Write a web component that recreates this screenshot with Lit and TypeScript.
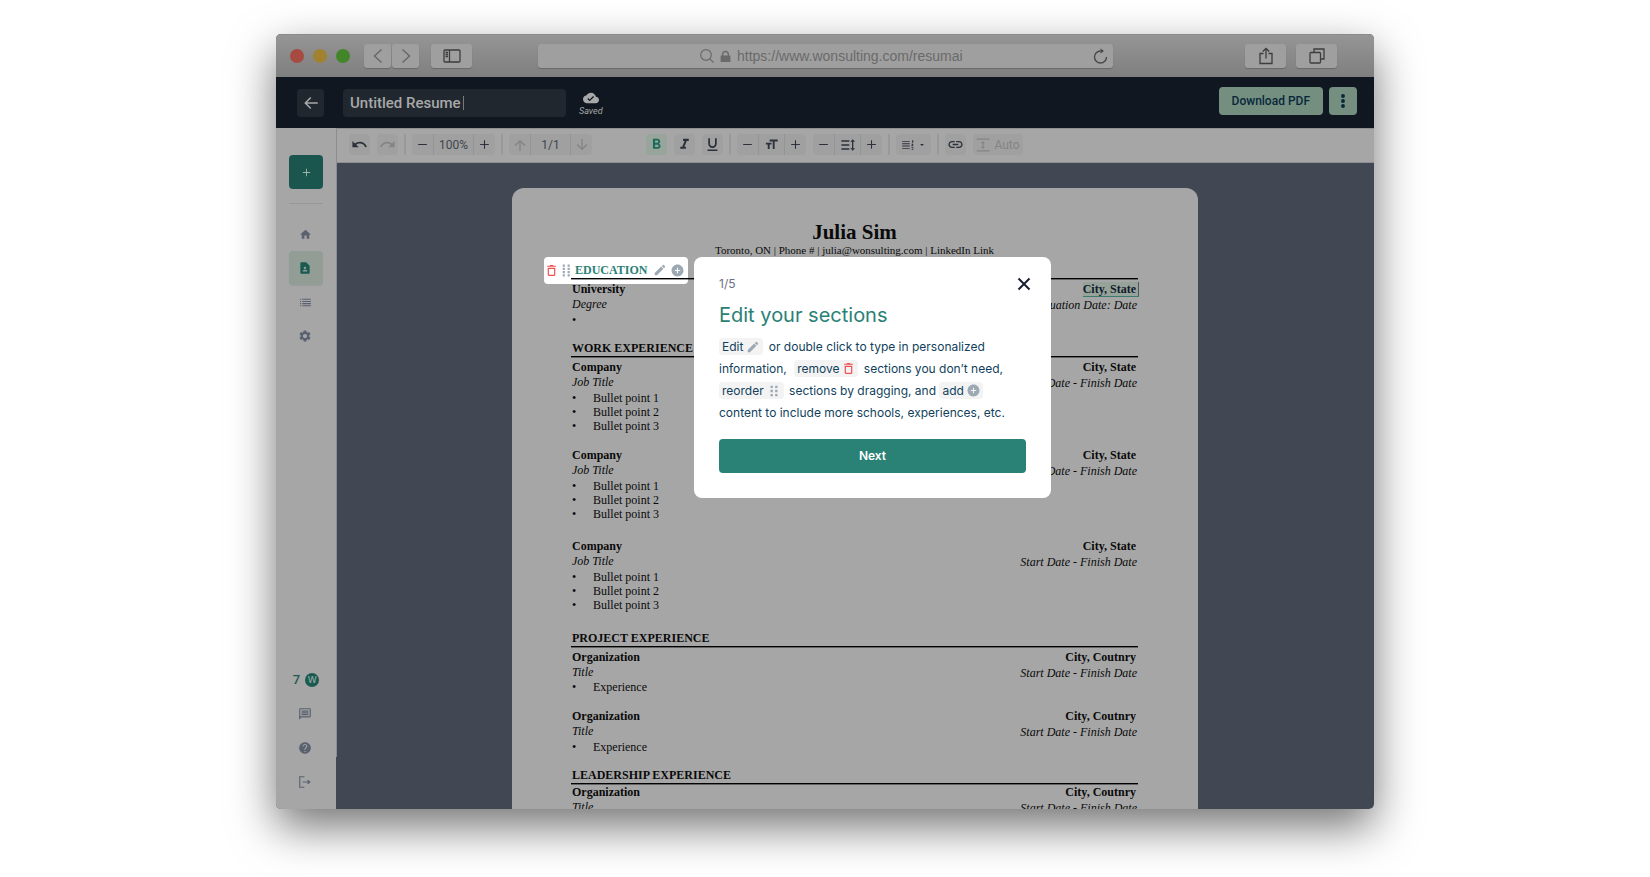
import { LitElement, html, css, svg, nothing } from "lit";
import { customElement } from "lit/decorators.js";
import { classMap } from "lit/directives/class-map.js";

const P: Record<string, string> = {
  home: "M10 20v-6h4v6h5v-8h3L12 3 2 12h3v8z",
  settings:
    "M19.14 12.94c.04-.3.06-.61.06-.94 0-.32-.02-.64-.07-.94l2.03-1.58c.18-.14.23-.41.12-.61l-1.92-3.32c-.12-.22-.37-.29-.59-.22l-2.39.96c-.5-.38-1.03-.7-1.62-.94l-.36-2.54c-.04-.24-.24-.41-.48-.41h-3.84c-.24 0-.43.17-.47.41l-.36 2.54c-.59.24-1.13.57-1.62.94l-2.39-.96c-.22-.08-.47 0-.59.22L2.74 8.87c-.12.21-.08.47.12.61l2.03 1.58c-.05.3-.09.63-.09.94s.02.64.07.94l-2.03 1.58c-.18.14-.23.41-.12.61l1.92 3.32c.12.22.37.29.59.22l2.39-.96c.5.38 1.03.7 1.62.94l.36 2.54c.05.24.24.41.48.41h3.84c.24 0 .44-.17.47-.41l.36-2.54c.59-.24 1.13-.56 1.62-.94l2.39.96c.22.08.47 0 .59-.22l1.92-3.32c.12-.22.07-.47-.12-.61l-2.01-1.58zM12 15.6c-1.98 0-3.6-1.62-3.6-3.6s1.62-3.6 3.6-3.6 3.6 1.62 3.6 3.6-1.62 3.6-3.6 3.6z",
  list: "M2 5h2v2H2zM6 5h16v2H6zM2 9h2v2H2zM6 9h16v2H6zM2 13h2v2H2zM6 13h16v2H6zM2 17h2v2H2zM6 17h16v2H6z",
  profile:
    "M14 2H6c-1.1 0-2 .9-2 2v16c0 1.1.9 2 2 2h12c1.1 0 2-.9 2-2V8l-6-6zm-2 8c1.1 0 2 .9 2 2s-.9 2-2 2-2-.9-2-2 .9-2 2-2zm4 8H8v-.57c0-.81.48-1.53 1.22-1.85a6.95 6.95 0 0 1 5.56 0A2.01 2.01 0 0 1 16 17.43V18z",
  chat: "M20 2H4c-1.1 0-1.99.9-1.99 2L2 22l4-4h14c1.1 0 2-.9 2-2V4c0-1.1-.9-2-2-2zM4 4h16v12H4zM6 12h12v2H6zM6 9h12v2H6zM6 6h12v2H6z",
  help: "M12 2C6.48 2 2 6.48 2 12s4.48 10 10 10 10-4.48 10-10S17.52 2 12 2zm1 17h-2v-2h2v2zm2.07-7.75l-.9.92C13.45 12.9 13 13.5 13 15h-2v-.5c0-1.1.45-2.1 1.17-2.83l1.24-1.26c.37-.36.59-.86.59-1.41 0-1.1-.9-2-2-2s-2 .9-2 2H8c0-2.21 1.79-4 4-4s4 1.79 4 4c0 .88-.36 1.68-.93 2.25z",
  logout: "M17 8l-1.41 1.41L17.17 11H8v2h9.17l-1.58 1.58L17 16l5-4zM4 4h7V2H2v20h9v-2H4z",
  undo: "M12.5 8c-2.65 0-5.05.99-6.9 2.6L2 7v9h9l-3.62-3.62c1.39-1.16 3.16-1.88 5.12-1.88 3.54 0 6.55 2.31 7.6 5.5l2.37-.78C21.08 11.03 17.15 8 12.5 8z",
  redo: "M18.4 10.6C16.55 8.99 14.15 8 11.5 8c-4.65 0-8.58 3.03-9.96 7.22L3.9 16c1.05-3.19 4.05-5.5 7.6-5.5 1.95 0 3.73.72 5.12 1.88L13 16h9V7l-3.6 3.6z",
  minus: "M4 11h16v2H4z",
  plus: "M20 13h-7v7h-2v-7H4v-2h7V4h2v7h7z",
  up: "M4 12l1.41 1.41L11 7.83V21h2V7.83l5.58 5.59L20 12l-8-8z",
  down: "M20 12l-1.41-1.41L13 16.17V3h-2v13.17l-5.58-5.59L4 12l8 8z",
  back: "M21 11H6.83l5.59-5.59L11 4l-8 8 8 8 1.41-1.41L6.83 13H21z",
  bold: "M15.6 10.79c.97-.67 1.65-1.77 1.65-2.79 0-2.26-1.75-4-4-4H7v14h7.04c2.09 0 3.71-1.7 3.71-3.79 0-1.52-.86-2.82-2.15-3.42zM10 6.5h3c.83 0 1.5.67 1.5 1.5s-.67 1.5-1.5 1.5h-3v-3zm3.5 9H10v-3h3.5c.83 0 1.5.67 1.5 1.5s-.67 1.5-1.5 1.5z",
  italic: "M10 4v3h2.21l-3.42 8H6v3h8v-3h-2.21l3.42-8H18V4z",
  underline:
    "M12 17c3.31 0 6-2.69 6-6V3h-2.5v8c0 1.93-1.57 3.5-3.5 3.5S8.5 12.93 8.5 11V3H6v8c0 3.31 2.69 6 6 6zm-7 2v2h14v-2H5z",
  size: "M9 4v3h5v12h3V7h5V4H9zm-6 8h3v7h3v-7h3V9H3v3z",
  spacing: "M18 7h-2.5L19 3.5 22.5 7H20v10h2.5L19 20.5 15.5 17H18V7zM14 5v2H2V5h12zm0 14H2v-2h12v2zm0-6H2v-2h12v2z",
  numbered:
    "M2 5h13v1.500H2zM2 9h13v1.500H2zM2 13h13v1.500H2zM2 17h13v1.500H2zM19 4h2v4h-2zM18 10h3v2h-1v1h1v1h-3v-2h1v-1h-1zM18 16h3v4h-3v-1h2v-2h-2z",
  link: "M3.9 12c0-1.71 1.39-3.1 3.1-3.1h4V7H7c-2.76 0-5 2.24-5 5s2.24 5 5 5h4v-1.9H7c-1.71 0-3.1-1.39-3.1-3.1zM8 13h8v-2H8v2zm9-6h-4v1.9h4c1.71 0 3.1 1.39 3.1 3.1s-1.39 3.1-3.1 3.1h-4V17h4c2.76 0 5-2.24 5-5s-2.24-5-5-5z",
  fit: "M1 1h22v2H1zM1 21h22v2H1zM13 9h2.500L12 5 8.500 9H11v6H8.500l3.500 4 3.500-4H13z",
  cloud:
    "M19.35 10.04C18.67 6.59 15.64 4 12 4 9.11 4 6.6 5.64 5.35 8.04 2.34 8.36 0 10.91 0 14c0 3.31 2.69 6 6 6h13c2.76 0 5-2.24 5-5 0-2.64-2.05-4.78-4.65-4.96zM10 17l-3.5-3.5 1.41-1.41L10 14.17 15.18 9l1.41 1.41L10 17z",
  pencil:
    "M3 17.25V21h3.75L17.81 9.94l-3.75-3.75L3 17.25zM20.71 7.04c.39-.39.39-1.02 0-1.41l-2.34-2.34c-.39-.39-1.02-.39-1.41 0l-1.83 1.83 3.75 3.75 1.83-1.83z",
  addCircle:
    "M12 1C5.900 1 1 5.900 1 12s4.900 11 11 11 11-4.900 11-11S18.100 1 12 1zm5 12h-4v4h-2v-4H7v-2h4V7h2v4h4v2z",
  trash:
    "M5 20c0 1.100.9 2 2 2h10c1.100 0 2-.9 2-2V7H5v13zM7.200 9h9.600v10.800H7.200V9zm8.300-6l-1-1h-5l-1 1H4v2.200h16V3h-4.500z",
  drag: "M5 1h4v4H5zM14 1h4v4h-4zM5 7h4v4H5zM14 7h4v4h-4zM5 13h4v4H5zM14 13h4v4h-4zM5 19h4v4H5zM14 19h4v4h-4z",
  dragSmall: "M6 3h4v4H6zM14 3h4v4h-4zM6 10h4v4H6zM14 10h4v4h-4zM6 17h4v4H6zM14 17h4v4h-4z",
  kebab:
    "M12 8a2.600 2.600 0 1 0 0-5.200A2.600 2.600 0 0 0 12 8zm0 6.600a2.600 2.600 0 1 0 0-5.200 2.600 2.600 0 0 0 0 5.200zm0 6.600a2.600 2.600 0 1 0 0-5.200 2.600 2.600 0 0 0 0 5.200z",
  caret: "M6 9h12l-6 6z",
  lock: "M3 10h18v12H3zM5.500 10V8a6.500 6.500 0 0 1 13 0v2h-2.500V8a4 4 0 0 0-8 0v2z",
};

const icon = (name: string, size: number) => html`<svg
  class="ic"
  width=${size}
  height=${size}
  viewBox="0 0 24 24"
  aria-hidden="true"
>
  <path fill-rule="evenodd" d=${P[name]}></path>
</svg>`;

const line = (w: number, h: number, sw: number, body: unknown) => html`<svg
  class="ln"
  width=${w}
  height=${h}
  viewBox="0 0 ${w} ${h}"
  stroke-width=${sw}
  aria-hidden="true"
>
  ${body}
</svg>`;

interface Entry {
  title: string;
  sub: string;
  place: string;
  dates: string;
  items: string[];
  spacing?: "snug" | "roomy";
  selected?: boolean;
}
interface Section {
  name: string;
  gap: string;
  editing?: boolean;
  entries: Entry[];
}

const DATES = "Start Date - Finish Date";
const job = (spacing?: "roomy"): Entry => ({
  title: "Company",
  sub: "Job Title",
  place: "City, State",
  dates: DATES,
  items: ["Bullet point 1", "Bullet point 2", "Bullet point 3"],
  spacing,
});
const org = (spacing?: "snug"): Entry => ({
  title: "Organization",
  sub: "Title",
  place: "City, Coutnry",
  dates: DATES,
  items: ["Experience"],
  spacing,
});

const SECTIONS: Section[] = [
  {
    name: "EDUCATION",
    gap: "near",
    editing: true,
    entries: [
      {
        title: "University",
        sub: "Degree",
        place: "City, State",
        dates: "Graduation Date: Date",
        items: [""],
        selected: true,
      },
    ],
  },
  { name: "WORK EXPERIENCE", gap: "mid", entries: [job(), job(), job("roomy")] },
  { name: "PROJECT EXPERIENCE", gap: "far", entries: [org("snug"), org()] },
  { name: "LEADERSHIP EXPERIENCE", gap: "mid tight", entries: [org("snug")] },
];

const base = css`
  *,
  *::before,
  *::after {
    box-sizing: border-box;
  }
  button {
    font: inherit;
    color: inherit;
    border: 0;
    padding: 0;
    margin: 0;
    background: none;
    display: inline-flex;
    align-items: center;
    justify-content: center;
    flex: none;
  }
  h1,
  h2,
  p,
  ul {
    margin: 0;
    padding: 0;
    font-weight: 400;
  }
  ul {
    list-style: none;
  }
  .ic {
    fill: currentColor;
    display: block;
    flex: none;
  }
  .ln {
    fill: none;
    stroke: currentColor;
    display: block;
    flex: none;
  }
`;

@customElement("browser-bar")
class BrowserBar extends LitElement {
  static styles = [
    base,
    css`
      :host {
        display: flex;
        align-items: center;
        height: 43px;
        padding: 0 37px 0 14px;
        background: linear-gradient(#959595, #7f7f7f);
        border-top: 1px solid #8b8b8b;
        color: #555;
      }
      .lights {
        display: flex;
        gap: 9px;
        margin-right: 14px;
      }
      .dot {
        width: 14px;
        height: 14px;
        border-radius: 50%;
      }
      .red {
        background: #a74a42;
      }
      .yellow {
        background: #a08230;
      }
      .green {
        background: #438529;
      }
      .btn {
        width: 41px;
        height: 24px;
        border-radius: 3px;
        background: #9f9f9f;
        box-shadow: 0 1px 1px rgba(0, 0, 0, 0.2);
        color: #3d3d3d;
      }
      .nav {
        display: flex;
        gap: 1px;
        margin-right: 12px;
      }
      .nav .btn {
        width: 27px;
        color: #686868;
      }
      .url {
        flex: 1;
        min-width: 0;
        max-width: 575px;
        height: 24px;
        margin: 0 auto 0 66px;
        display: flex;
        align-items: center;
        padding: 0 5px 0 14px;
        border-radius: 3px;
        background: #9f9f9f;
        box-shadow: 0 1px 1px rgba(0, 0, 0, 0.2);
        color: #6a6a6a;
      }
      .addr {
        flex: 1;
        min-width: 0;
        display: flex;
        align-items: center;
        justify-content: center;
        gap: 5px;
        padding-left: 18px;
      }
      .addr input {
        width: 226px;
        padding: 0;
        border: 0;
        background: none;
        color: inherit;
        font: 14px/20px "Liberation Sans", sans-serif;
      }
      .end {
        display: flex;
        gap: 10px;
      }
      .url button {
        color: #484848;
      }
    `,
  ];
  render() {
    return html`
      <div class="lights">
        <span class="dot red"></span><span class="dot yellow"></span><span class="dot green"></span>
      </div>
      <div class="nav">
        <button class="btn" aria-label="Back">
          ${line(10, 16, 1.5, svg`<path d="M8.500 1.500L1.500 8l7 6.500"/>`)}
        </button>
        <button class="btn" aria-label="Forward">
          ${line(10, 16, 1.5, svg`<path d="M1.500 1.500L8.500 8l-7 6.500"/>`)}
        </button>
      </div>
      <button class="btn" aria-label="Show sidebar">
        ${line(
          18,
          14,
          1.3,
          svg`<rect x="1" y="1" width="16" height="12" rx="1"/><path d="M6.500 1v12M2.500 3.500H5M2.500 5.500H5M2.500 7.500H5"/>`,
        )}
      </button>
      <div class="url">
        <div class="addr">
          ${line(14, 14, 1.2, svg`<circle cx="6" cy="6" r="5.300"/><path d="M9.800 9.800L13.500 13.500"/>`)}
          ${icon("lock", 13)}
          <input aria-label="Address" value="https://www.wonsulting.com/resumai" />
        </div>
        <button aria-label="Reload">
          ${line(
            15,
            16,
            1.4,
            svg`<path d="M7.500 3A6 6 0 1 0 13.500 9"/><path d="M7.500.500v5L11 3z" fill="currentColor" stroke="none"/>`,
          )}
        </button>
      </div>
      <div class="end">
        <button class="btn" aria-label="Share">
          ${line(14, 18, 1.3, svg`<path d="M4.500 6.500H1v10h12v-10H9.500M7 11.500V1.500M3.800 4.500L7 1.300l3.200 3.200"/>`)}
        </button>
        <button class="btn" aria-label="Tabs">
          ${line(16, 16, 1.3, svg`<rect x="1" y="4.500" width="10.500" height="10.500" rx="1"/><path d="M5 4.500V1h10v10h-3.500"/>`)}
        </button>
      </div>
    `;
  }
}

@customElement("app-header")
class AppHeader extends LitElement {
  static styles = [
    base,
    css`
      :host {
        display: flex;
        align-items: center;
        height: 51px;
        padding: 0 17px 0 21px;
        background: #101720;
        color: #a8a8a8;
        font-family: Roboto, sans-serif;
      }
      .back {
        width: 27px;
        height: 28px;
        border-radius: 4px;
        background: #20272f;
        margin-right: 19px;
      }
      .name {
        display: flex;
        align-items: center;
        width: 223px;
        height: 28px;
        padding: 0 7px;
        border-radius: 4px;
        background: #20272f;
      }
      .name input {
        width: 113px;
        padding: 0;
        border: 0;
        background: none;
        color: inherit;
        font: 500 15px/20px Roboto, sans-serif;
      }
      .cursor {
        width: 1px;
        height: 14px;
        background: #777b80;
      }
      .saved {
        display: flex;
        flex-direction: column;
        align-items: center;
        margin-left: 13px;
        font: italic 9px/10px Roboto, sans-serif;
      }
      .actions {
        display: flex;
        gap: 6px;
        margin: 0 0 3px auto;
        font: 500 12px/16px Roboto, sans-serif;
        color: #08283a;
      }
      .actions button {
        height: 28px;
        border-radius: 4px;
        background: #748f80;
        padding: 0 13px;
      }
      .actions .more {
        width: 28px;
        padding: 0;
      }
    `,
  ];
  render() {
    return html`
      <button class="back" aria-label="Back to resumes">${icon("back", 18)}</button>
      <div class="name">
        <input aria-label="Resume name" value="Untitled Resume" /><span class="cursor"></span>
      </div>
      <div class="saved">${icon("cloud", 16)}<span>Saved</span></div>
      <div class="actions">
        <button>Download PDF</button>
        <button class="more" aria-label="More options">${icon("kebab", 18)}</button>
      </div>
    `;
  }
}

@customElement("side-nav")
class SideNav extends LitElement {
  static styles = [
    base,
    css`
      :host {
        position: relative;
        z-index: 1;
        display: flex;
        flex-direction: column;
        justify-content: space-between;
        width: 60px;
        flex: none;
        padding: 27px 13px 10px;
        background: #a6a6a6;
        color: #5a6270;
      }
      :host::after {
        content: "";
        position: absolute;
        left: 100%;
        top: 0;
        bottom: 52px;
        width: 1px;
        background: #8c8d92;
      }
      nav {
        display: flex;
        flex-direction: column;
      }
      button {
        width: 34px;
        height: 34px;
        border-radius: 4px;
        padding-right: 2px;
      }
      .add {
        background: #1b564e;
        color: #9fb3af;
        padding: 0;
      }
      .rule {
        height: 1px;
        background: #969799;
        margin: 14px 0 13px;
      }
      .on {
        background: #929d96;
        color: #1b5a50;
        box-shadow: 0 1px 1px rgba(0, 0, 0, 0.06);
      }
      .credits {
        height: 34px;
        display: flex;
        align-items: center;
        justify-content: center;
        gap: 5px;
        color: #1b5a50;
        font: 500 13px/16px Roboto, sans-serif;
      }
      .coin {
        width: 14px;
        height: 14px;
        border-radius: 50%;
        background: #1b5a50;
        color: #8fa8a2;
        text-align: center;
        font: 500 9px/14px Inter, sans-serif;
      }
    `,
  ];
  render() {
    return html`
      <nav aria-label="Main">
        <button class="add" aria-label="New">${icon("plus", 11)}</button>
        <div class="rule"></div>
        <button aria-label="Home">${icon("home", 13)}</button>
        <button class="on" aria-label="Resume">${icon("profile", 14)}</button>
        <button aria-label="List">${icon("list", 13)}</button>
        <button aria-label="Settings">${icon("settings", 14)}</button>
      </nav>
      <nav aria-label="Account">
        <div class="credits"><span>7</span><span class="coin">W</span></div>
        <button aria-label="Messages">${icon("chat", 14)}</button>
        <button aria-label="Help">${icon("help", 14)}</button>
        <button aria-label="Log out">${icon("logout", 14)}</button>
      </nav>
    `;
  }
}

@customElement("tool-bar")
class ToolBar extends LitElement {
  static styles = [
    base,
    css`
      :host {
        display: flex;
        align-items: center;
        gap: 7px;
        height: 35px;
        padding: 0 13px 2px;
        background: #a6a6a6;
        border-top: 1px solid #8e8e93;
        border-bottom: 1px solid #8e8f94;
        color: #2c313c;
        font: 12px/16px Roboto, sans-serif;
      }
      .b,
      .grp {
        height: 21px;
        border-radius: 4px;
        background: #a0a0a0;
      }
      .b {
        width: 21px;
      }
      .off {
        color: #828487;
      }
      .on {
        color: #1b6a5c;
        background: #98a59d;
      }
      .grp {
        display: flex;
        flex: none;
      }
      .grp button {
        width: 21px;
        height: 21px;
      }
      .val {
        display: flex;
        align-items: center;
        justify-content: center;
        width: 41px;
        border: 1px solid #939496;
        border-width: 0 1px;
        color: #3f444e;
      }
      .glyph {
        width: 27px;
        color: #2c313c;
      }
      .bar {
        width: 2px;
        height: 21px;
        margin: 0 -1px;
        background: #999;
      }
      .split {
        flex: none;
        width: 40px;
      }
      .menu {
        width: 35px;
        gap: 3px;
      }
      .auto {
        width: 50px;
        gap: 4px;
      }
    `,
  ];
  render() {
    return html`
      <button class="b" aria-label="Undo">${icon("undo", 17)}</button>
      <button class="b off" aria-label="Redo">${icon("redo", 17)}</button>
      <span class="bar"></span>
      <div class="grp">
        <button aria-label="Zoom out">${icon("minus", 13)}</button>
        <span class="val">100%</span>
        <button aria-label="Zoom in">${icon("plus", 13)}</button>
      </div>
      <span class="bar"></span>
      <div class="grp">
        <button class="off" aria-label="Previous page">${icon("up", 16)}</button>
        <span class="val">1/1</span>
        <button class="off" aria-label="Next page">${icon("down", 16)}</button>
      </div>
      <span class="split"></span>
      <button class="b on" aria-label="Bold">${icon("bold", 17)}</button>
      <button class="b" aria-label="Italic">${icon("italic", 17)}</button>
      <button class="b" aria-label="Underline">${icon("underline", 17)}</button>
      <span class="bar"></span>
      <div class="grp">
        <button aria-label="Smaller text">${icon("minus", 13)}</button>
        <span class="val glyph">${icon("size", 15)}</span>
        <button aria-label="Larger text">${icon("plus", 13)}</button>
      </div>
      <div class="grp">
        <button aria-label="Less spacing">${icon("minus", 13)}</button>
        <span class="val glyph">${icon("spacing", 16)}</span>
        <button aria-label="More spacing">${icon("plus", 13)}</button>
      </div>
      <span class="bar"></span>
      <button class="b menu" aria-label="List style">${icon("numbered", 14)}${icon("caret", 8)}</button>
      <span class="bar"></span>
      <button class="b" aria-label="Link">${icon("link", 17)}</button>
      <button class="b auto off">${icon("fit", 14)}Auto</button>
    `;
  }
}

@customElement("tour-step")
class TourStep extends LitElement {
  static styles = [
    base,
    css`
      :host {
        display: block;
        padding: 20px 25px;
        border-radius: 8px;
        background: #fff;
        color: #113f5c;
        font: 12px/22px Inter, sans-serif;
      }
      .top {
        display: flex;
        justify-content: space-between;
        align-items: center;
        height: 14px;
        color: #6b7280;
      }
      .close {
        width: 14px;
        height: 14px;
        margin-right: -5px;
        color: #182033;
      }
      h2 {
        margin: 11px 0 8px;
        font: 400 20px/26px Inter, sans-serif;
        color: #2a8175;
      }
      p {
        white-space: nowrap;
      }
      .chip {
        display: inline-flex;
        align-items: center;
        gap: 3px;
        height: 17px;
        padding: 0 3px;
        margin-right: 2px;
        border-radius: 4px;
        background: #f3f3f3;
        line-height: 17px;
        vertical-align: baseline;
      }
      .inner {
        margin-left: 4px;
      }
      .grey {
        color: #9ca9b3;
      }
      .red {
        color: #f04f4f;
      }
      .next {
        width: 100%;
        height: 34px;
        margin: 15px 0 5px;
        border-radius: 4px;
        background: #2a8175;
        color: #fff;
        font: 600 12px/16px Inter, sans-serif;
      }
    `,
  ];
  render() {
    return html`
      <div class="top">
        <span>1/5</span>
        <button class="close" aria-label="Close">
          ${line(14, 14, 2, svg`<path d="M1.500 1.500l11 11M12.500 1.500l-11 11"/>`)}
        </button>
      </div>
      <h2>Edit your sections</h2>
      <p>
        <span class="chip">Edit <span class="grey">${icon("pencil", 14)}</span></span> or double click to type in
        personalized<br />information,
        <span class="chip inner">remove <span class="red">${icon("trash", 13)}</span></span> sections you don’t
        need,<br /><span class="chip">reorder <span class="grey">${icon("dragSmall", 14)}</span></span> sections by
        dragging, and <span class="chip">add <span class="grey">${icon("addCircle", 13)}</span></span><br />content
        to include more schools, experiences, etc.
      </p>
      <button class="next">Next</button>
    `;
  }
}

@customElement("resume-page")
class ResumePage extends LitElement {
  static styles = [
    base,
    css`
      :host {
        display: block;
        position: relative;
        width: 100%;
        max-width: 686px;
        padding: 33px 60px 0 59px;
        border-radius: 12px 12px 0 0;
        background: #a6a6a6;
        color: #0a0a0a;
        font: 12px/15px "Liberation Serif", serif;
      }
      h1 {
        font-size: 21px;
        line-height: 22px;
        font-weight: 700;
        text-align: center;
      }
      .contact {
        font-size: 11px;
        line-height: 14px;
        text-align: center;
        white-space: nowrap;
      }
      section.near {
        margin-top: 6px;
      }
      section.mid {
        margin-top: 14px;
      }
      section.far {
        margin-top: 19px;
      }
      .head {
        position: relative;
        margin-bottom: 3px;
      }
      .tight .head {
        margin-bottom: 1px;
      }
      .head h2 {
        font: 700 12px/15px "Liberation Serif", serif;
        padding-left: 1px;
      }
      .head::after {
        content: "";
        display: block;
        position: relative;
        z-index: 1;
        height: 1px;
        background: #000;
        box-shadow: 0 1px rgba(0, 0, 0, 0.4);
      }
      .edit {
        position: absolute;
        left: -27px;
        top: -6px;
        height: 27px;
        display: flex;
        align-items: center;
        padding: 0 4px 1px 1px;
        border-radius: 4px;
        background: #fff;
        color: #9ca9b3;
      }
      .edit h2 {
        color: #2a8175;
        padding: 0;
        margin-right: 6px;
      }
      .edit .del {
        color: #f04f4f;
        margin-right: 2px;
      }
      .edit .grab {
        margin-right: 2px;
      }
      .edit .pen {
        margin-right: 4px;
      }
      .hold {
        height: 15px;
      }
      .entry {
        display: flex;
        justify-content: space-between;
        padding: 0 1px;
      }
      .entry + .entry {
        margin-top: 15px;
      }
      .entry + .entry.roomy {
        margin-top: 18px;
      }
      .t {
        font-weight: 700;
      }
      .s {
        font-style: italic;
      }
      ul {
        margin-top: 1px;
        line-height: 14px;
      }
      .snug ul {
        margin-top: 0;
      }
      li {
        display: flex;
        min-height: 14px;
      }
      li::before {
        content: "•";
        width: 21px;
      }
      .when {
        text-align: right;
        line-height: 16px;
      }
      .where {
        font-weight: 700;
        padding-right: 1px;
        line-height: 15px;
      }
      .sel {
        display: inline-block;
        line-height: 14px;
        margin-right: -3px;
        padding-right: 2px;
        background: #96a39b;
        border-right: 1px solid #4c5560;
        box-shadow: 0 1px #3c7a6d;
        color: #111a2a;
      }
      .tour {
        position: absolute;
        z-index: 2;
        left: 182px;
        top: 69px;
        width: 357px;
      }
    `,
  ];
  render() {
    return html`
      <h1>Julia Sim</h1>
      <p class="contact">Toronto, ON | Phone # | julia@wonsulting.com | LinkedIn Link</p>
      ${SECTIONS.map(
        (s) => html`<section class=${s.gap}>
          <div class="head">
            ${s.editing
              ? html`<div class="hold"></div>
                  <div class="edit">
                    <button class="del" aria-label="Remove section">${icon("trash", 13)}</button>
                    <button class="grab" aria-label="Reorder section">${icon("drag", 13)}</button>
                    <h2>${s.name}</h2>
                    <button class="pen" aria-label="Edit section">${icon("pencil", 14)}</button>
                    <button aria-label="Add entry">${icon("addCircle", 13)}</button>
                  </div>`
              : html`<h2>${s.name}</h2>`}
          </div>
          ${s.entries.map(
            (e) => html`<div class=${classMap({ entry: true, [e.spacing ?? "plain"]: true })}>
              <div>
                <div class="t">${e.title}</div>
                <div class="s">${e.sub}</div>
                <ul>
                  ${e.items.map((i) => html`<li>${i || nothing}</li>`)}
                </ul>
              </div>
              <div class="when">
                <div class="where">${e.selected ? html`<span class="sel">${e.place}</span>` : e.place}</div>
                <div class="s">${e.dates}</div>
              </div>
            </div>`,
          )}
        </section>`,
      )}
      <tour-step class="tour" role="dialog" aria-label="Edit your sections"></tour-step>
    `;
  }
}

@customElement("app-root")
class AppRoot extends LitElement {
  static styles = [
    base,
    css`
      :host {
        display: flex;
        box-sizing: border-box;
        height: 100vh;
        padding: 34px 0 68px;
        background: #fff;
        overflow: hidden;
      }
      .shadow {
        display: flex;
        width: 100%;
        max-width: 1098px;
        margin: 0 auto;
        border-radius: 5px;
        box-shadow: 0 18px 45px rgba(0, 0, 0, 0.55);
      }
      .window {
        display: flex;
        flex-direction: column;
        flex: 1;
        min-width: 0;
        border-radius: 5px;
        overflow: hidden;
        background: #424754;
      }
      .body {
        flex: 1;
        min-height: 0;
        display: flex;
      }
      main {
        flex: 1;
        min-width: 0;
        display: flex;
        flex-direction: column;
      }
      .canvas {
        flex: 1;
        min-height: 0;
        display: flex;
        justify-content: center;
        padding-top: 25px;
        overflow: hidden;
      }
    `,
  ];
  render() {
    return html`<div class="shadow">
      <div class="window">
        <browser-bar></browser-bar>
        <app-header></app-header>
        <div class="body">
          <side-nav></side-nav>
          <main>
            <tool-bar></tool-bar>
            <div class="canvas"><resume-page></resume-page></div>
          </main>
        </div>
      </div>
    </div>`;
  }
}
